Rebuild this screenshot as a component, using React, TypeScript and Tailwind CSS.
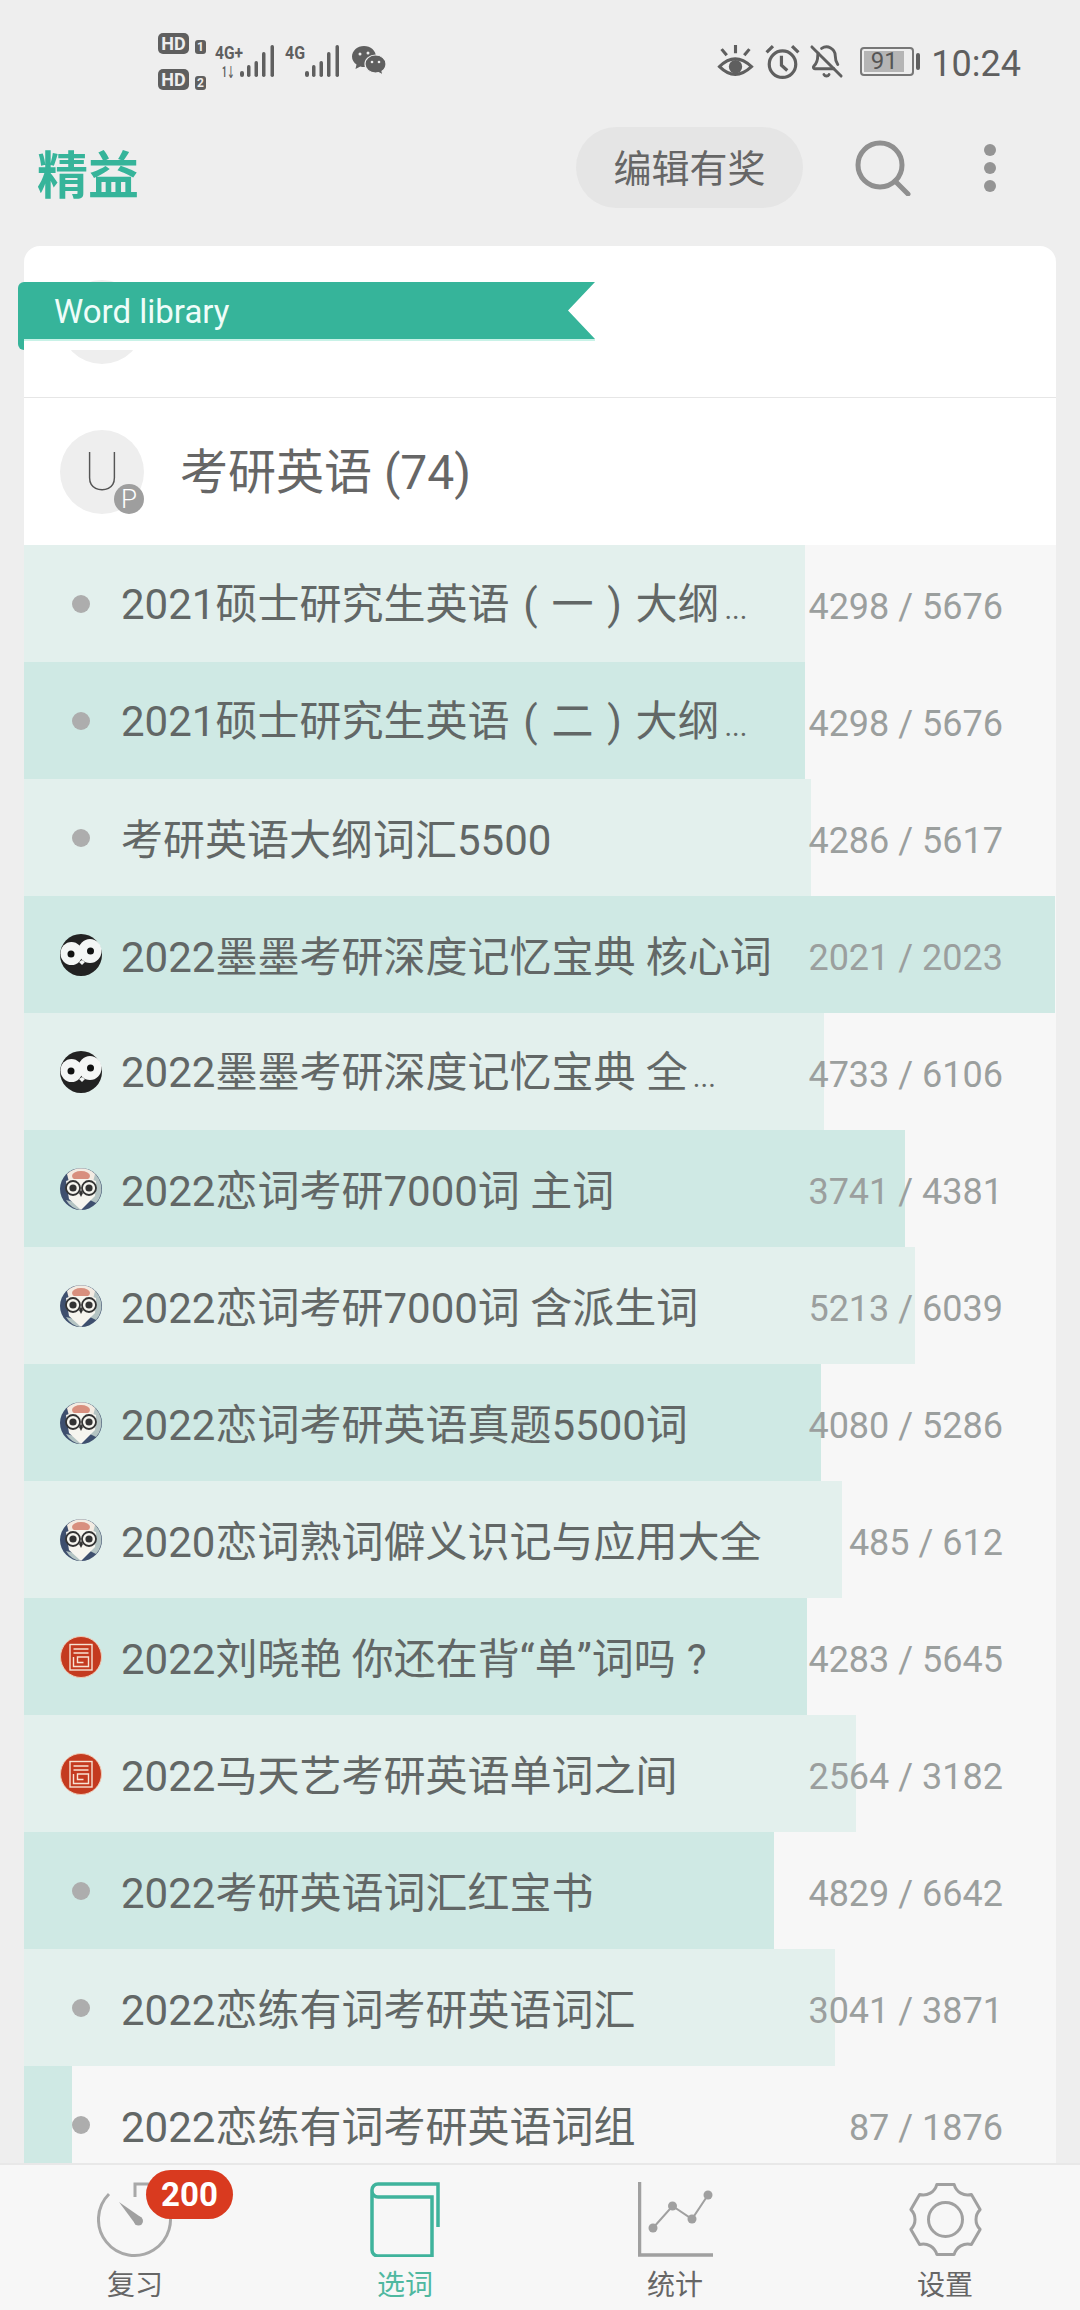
import type { ReactNode } from "react";
import { BellOff } from "lucide-react";

type Book = {
  title: ReactNode;
  learned: number;
  total: number;
  icon: "dot" | "momo" | "owl" | "seal";
};

// punctuation sits centred in a full-width cell in the reference
const Wide = ({ children }: { children: ReactNode }) => (
  <span className="inline-block w-[42px] text-center">{children}</span>
);
const Dots = () => <span className="ml-[5px] text-[29px]">...</span>;

const books: Book[] = [
  {
    title: (
      <>
        2021硕士研究生英语<Wide>(</Wide>一<Wide>)</Wide>大纲<Dots />
      </>
    ),
    learned: 4298,
    total: 5676,
    icon: "dot",
  },
  {
    title: (
      <>
        2021硕士研究生英语<Wide>(</Wide>二<Wide>)</Wide>大纲<Dots />
      </>
    ),
    learned: 4298,
    total: 5676,
    icon: "dot",
  },
  { title: "考研英语大纲词汇5500", learned: 4286, total: 5617, icon: "dot" },
  { title: "2022墨墨考研深度记忆宝典 核心词", learned: 2021, total: 2023, icon: "momo" },
  {
    title: (
      <>
        2022墨墨考研深度记忆宝典 全<Dots />
      </>
    ),
    learned: 4733,
    total: 6106,
    icon: "momo",
  },
  { title: "2022恋词考研7000词 主词", learned: 3741, total: 4381, icon: "owl" },
  { title: "2022恋词考研7000词 含派生词", learned: 5213, total: 6039, icon: "owl" },
  { title: "2022恋词考研英语真题5500词", learned: 4080, total: 5286, icon: "owl" },
  { title: "2020恋词熟词僻义识记与应用大全", learned: 485, total: 612, icon: "owl" },
  {
    title: (
      <>
        2022刘晓艳 你还在背“单”词吗<Wide>?</Wide>
      </>
    ),
    learned: 4283,
    total: 5645,
    icon: "seal",
  },
  { title: "2022马天艺考研英语单词之间", learned: 2564, total: 3182, icon: "seal" },
  { title: "2022考研英语词汇红宝书", learned: 4829, total: 6642, icon: "dot" },
  { title: "2022恋练有词考研英语词汇", learned: 3041, total: 3871, icon: "dot" },
  { title: "2022恋练有词考研英语词组", learned: 87, total: 1876, icon: "dot" },
];

// six tooth gear outline for the settings tab
function gearPath() {
  const cx = 36.5;
  const cy = 37.5;
  const outer = 36;
  const half = (14 * Math.PI) / 180;
  const pt = (a: number, r: number) =>
    `${(cx + r * Math.cos(a)).toFixed(2)} ${(cy + r * Math.sin(a)).toFixed(2)}`;
  let d = "";
  for (let i = 0; i < 6; i++) {
    const a = -Math.PI / 2 + (i * Math.PI) / 3;
    d += `${i === 0 ? "M" : "A14 14 0 0 0 "}${pt(a - half, outer)}L${pt(a + half, outer)}`;
  }
  return `${d}A14 14 0 0 0 ${pt(-Math.PI / 2 - half, outer)}Z`;
}

function MomoLogo() {
  return (
    <svg width="42" height="42" viewBox="0 0 42 42">
      <circle cx="21" cy="21" r="21" fill="#222" />
      <ellipse cx="11.5" cy="19.5" rx="11" ry="11.5" fill="#f4f6f5" />
      <ellipse cx="30" cy="17" rx="11.5" ry="12" fill="#f4f6f5" />
      <circle cx="11" cy="20" r="3.5" fill="#111" />
      <circle cx="30.5" cy="17" r="3.5" fill="#111" />
      <path d="M19 28l3 3 3-3-3-2z" fill="#f4f6f5" />
    </svg>
  );
}

function OwlLogo() {
  return (
    <svg width="42" height="42" viewBox="0 0 42 42">
      <circle cx="21" cy="21" r="21" fill="#3e4f6e" />
      <path d="M27 1a21 21 0 0 1 9 34l-8-4z" fill="#b4c4c3" />
      <path d="M7 6a20 20 0 0 1 28 0l-2 8H9z" fill="#f3ebe2" />
      <path d="M6 32a21 21 0 0 0 14 10l2-6z" fill="#b4c4c3" />
      <ellipse cx="21" cy="8" rx="9" ry="5" fill="#d88f7e" />
      <path d="M6 13l6-2h18l6 2-1 15-14 14-12-11z" fill="#f6f5ef" />
      <circle cx="13" cy="20" r="7" fill="#f6f5ef" stroke="#333" strokeWidth="1.8" />
      <circle cx="29" cy="20" r="7" fill="#f6f5ef" stroke="#333" strokeWidth="1.8" />
      <circle cx="13" cy="20" r="3.6" fill="#333" />
      <circle cx="29" cy="20" r="3.6" fill="#333" />
      <path d="M21 22l-2 3 2 4 2-4z" fill="#333" />
    </svg>
  );
}

function SealLogo() {
  return (
    <svg width="42" height="42" viewBox="0 0 42 42">
      <circle cx="21" cy="21" r="20.5" fill="#c43a1f" stroke="#f0c9b4" strokeWidth="1" />
      <g fill="none" stroke="#f7e2d2" strokeWidth="1.4">
        <rect x="10" y="8.5" width="22" height="25.5" />
        <path d="M13.5 13h15M13.5 17h15M13.5 21v9.5h15V21h-11v5.5h6" />
      </g>
    </svg>
  );
}

function BookIcon({ icon }: { icon: Book["icon"] }) {
  if (icon === "momo") return <MomoLogo />;
  if (icon === "owl") return <OwlLogo />;
  if (icon === "seal") return <SealLogo />;
  return <div className="h-[18px] w-[18px] rounded-full bg-[#adadad]" />;
}

function BookRow({ book, index }: { book: Book; index: number }) {
  return (
    <div className="relative flex h-[117px] shrink-0 items-center pl-[36px] pr-[53px]">
      <div
        className={`absolute inset-y-0 left-0 ${index % 2 ? "bg-[#cfe9e4]" : "bg-[#e3f0ed]"}`}
        style={{ width: `${(book.learned / book.total) * 100}%` }}
      />
      <div className="relative flex w-[42px] shrink-0 justify-center">
        <BookIcon icon={book.icon} />
      </div>
      <div className="relative ml-[19px] mt-[6px] whitespace-nowrap text-[42px] leading-[56px] text-[#626766]">
        {book.title}
      </div>
      <div className="relative ml-auto mt-[6px] whitespace-nowrap text-[36px] leading-[48px] text-[#9b9f9e]">
        {book.learned} / {book.total}
      </div>
    </div>
  );
}

function StatusBar() {
  return (
    <div className="flex h-[122px] shrink-0 items-center justify-between pl-[158px] pr-[59px] text-[#5f5f5f]">
      <div className="flex items-center">
        <div className="flex w-[48px] flex-col gap-[15px]">
          {["1", "2"].map((n) => (
            <div key={n} className="flex items-end justify-between">
              <span className="flex h-[21px] w-[31px] items-center justify-center rounded-[5px] bg-[#5f5f5f] text-[18px] font-bold leading-[21px] text-[#eee]">
                HD
              </span>
              <span className="flex h-[14px] w-[11px] items-center justify-center rounded-[3px] bg-[#5f5f5f] text-[12px] font-bold leading-[14px] text-[#eee]">
                {n}
              </span>
            </div>
          ))}
        </div>
        <svg className="ml-[9px]" width="125" height="34" viewBox="0 0 125 34" fill="#5f5f5f">
          <text x="0" y="15" fontSize="18" fontWeight="700" textLength="28" lengthAdjust="spacingAndGlyphs">
            4G+
          </text>
          <text x="7" y="33" fontSize="14" fontWeight="700" textLength="13" lengthAdjust="spacingAndGlyphs">
            1↓
          </text>
          <rect x="25" y="27" width="4" height="6" rx="2" />
          <rect x="32" y="21" width="3.5" height="12" rx="1.7" />
          <rect x="39.5" y="17" width="3.5" height="16" rx="1.7" />
          <rect x="47" y="8" width="3.5" height="25" rx="1.7" />
          <rect x="55.5" y="1" width="3.5" height="32" rx="1.7" />
          <text x="70" y="15" fontSize="18" fontWeight="700" textLength="20" lengthAdjust="spacingAndGlyphs">
            4G
          </text>
          <rect x="90" y="27" width="4" height="6" rx="2" />
          <rect x="97" y="21" width="3.5" height="12" rx="1.7" />
          <rect x="104.5" y="17" width="3.5" height="16" rx="1.7" />
          <rect x="112" y="8" width="3.5" height="25" rx="1.7" />
          <rect x="120.5" y="1" width="3.5" height="32" rx="1.7" />
        </svg>
        <svg className="ml-[12px]" width="34" height="30" viewBox="0 0 34 30">
          <path d="M12 0C5.4 0 0 4.7 0 10.500c0 3.300 1.800 6.200 4.500 8.100L3.500 23l4.800-2.600c1.200.4 2.400.6 3.700.6 6.600 0 12-4.700 12-10.500S18.600 0 12 0z" fill="#5f5f5f" />
          <path d="M23.500 9C17.700 9 13 13 13 18s4.700 9 10.500 9c1 0 2-.1 3-.4L31 29l-1-3.700c2.500-1.700 4-4.300 4-7.300 0-5-4.700-9-10.500-9z" fill="#5f5f5f" stroke="#eee" strokeWidth="1.2" />
          <circle cx="8" cy="8" r="1.500" fill="#eee" />
          <circle cx="16" cy="7" r="1.500" fill="#eee" />
          <circle cx="20" cy="16" r="1.300" fill="#eee" />
          <circle cx="27" cy="16" r="1.300" fill="#eee" />
        </svg>
      </div>
      <div className="flex items-center">
        <svg width="37" height="33" viewBox="0 0 35 32" fill="none" stroke="#5f5f5f" strokeWidth="3">
          <path d="M2 21Q17 6 33 21Q17 36 2 21z" />
          <circle cx="17.500" cy="21" r="6.500" fill="#5f5f5f" stroke="none" />
          <path d="M17.500 0v8M4 4l5 6M31 4l-5 6" />
        </svg>
        <svg className="ml-[11px]" width="35" height="35" viewBox="0 0 33 33" fill="none" stroke="#5f5f5f" strokeWidth="3">
          <circle cx="16.500" cy="19" r="12.500" />
          <path d="M15.500 11v9l5.500 5M1.500 8l6-6M31.500 8l-6-6" />
        </svg>
        <BellOff className="ml-[9px]" size={35} strokeWidth={2} color="#5f5f5f" />
        <div className="ml-[16px] flex items-center">
          <div className="flex h-[29px] w-[54px] items-center rounded-[4px] border-2 border-[#777] p-[2px]">
            <div className="flex h-full w-[40px] items-center justify-center bg-[#b5b5b5] text-[24px] leading-none text-[#555]">
              91
            </div>
          </div>
          <div className="ml-[2px] h-[17px] w-[4px] rounded-full bg-[#5f5f5f]" />
        </div>
        <div className="ml-[11px] mt-[6px] text-[36px] leading-none text-[#5f5f5f]">10:24</div>
      </div>
    </div>
  );
}

function Header() {
  return (
    <div className="flex shrink-0 items-center pb-[38px] pl-[37px] pr-[84px] pt-[5px]">
      <div className="mt-[17px] text-[51px] font-bold leading-[51px] text-[#36b49a]">精益</div>
      <div className="ml-auto flex h-[81px] w-[227px] items-center justify-center rounded-full bg-[#e5e5e5] pt-[3px] text-[38px] text-[#666]">
        编辑有奖
      </div>
      <svg className="ml-[52px]" width="56" height="56" viewBox="0 0 56 56" fill="none" stroke="#8f8f8f" strokeWidth="5" strokeLinecap="round">
        <circle cx="25" cy="25" r="22" />
        <path d="M40 41l13 13" />
      </svg>
      <div className="ml-[73px] flex flex-col gap-[6px]">
        <div className="h-[12px] w-[12px] rounded-full bg-[#949494]" />
        <div className="h-[12px] w-[12px] rounded-full bg-[#949494]" />
        <div className="h-[12px] w-[12px] rounded-full bg-[#949494]" />
      </div>
    </div>
  );
}

function TabBar() {
  const label = "mt-[13px] text-[28px] leading-[32px]";
  return (
    <div className="grid h-[147px] shrink-0 grid-cols-4 border-t-2 border-[#e8e8e8] bg-[#f7f7f7] pt-[17px]">
      <div className="flex flex-col items-center">
        <div className="relative h-[75px] w-[76px]">
          <svg width="76" height="76" viewBox="0 0 76 76" fill="none" stroke="#a8a8a8" strokeWidth="3">
            <path d="M12 12A36 36 0 1 0 70 22" />
            <path d="M38 15V2h14" />
            <path d="M22 20l23 16-6 7z" fill="#a0a0a0" stroke="none" />
            <circle cx="41.500" cy="39" r="4.500" fill="#a0a0a0" stroke="none" />
          </svg>
          <div className="absolute left-[49px] top-[-12px] flex h-[49px] w-[87px] items-center justify-center rounded-full bg-[#d93a1f] text-[33px] font-bold leading-none text-white">
            200
          </div>
        </div>
        <div className={`${label} text-[#666]`}>复习</div>
      </div>
      <div className="flex flex-col items-center">
        <svg width="70" height="75" viewBox="0 0 70 75" fill="none" stroke="#3fb39c" strokeWidth="3.500">
          <path d="M68 45V2H8a6 6 0 0 0-6 6v60a6 6 0 0 0 6 6h54V15H8a6 6 0 0 1-6-6" />
        </svg>
        <div className={`${label} text-[#4fb8a0]`}>选词</div>
      </div>
      <div className="flex flex-col items-center">
        <svg width="75" height="75" viewBox="0 0 75 75" fill="none" stroke="#a0a0a0">
          <path d="M1.500 0v73H75" strokeWidth="3.500" />
          <path d="M15 46L34.500 24 54 37 70 13" strokeWidth="2" />
          <g fill="#a0a0a0" stroke="none">
            <circle cx="15" cy="46" r="4.500" />
            <circle cx="34.500" cy="24" r="4.500" />
            <circle cx="54" cy="37" r="4.500" />
            <circle cx="70" cy="13" r="4.500" />
          </g>
        </svg>
        <div className={`${label} text-[#666]`}>统计</div>
      </div>
      <div className="flex flex-col items-center">
        <svg width="75" height="75" viewBox="0 0 73 75" fill="none" stroke="#a0a0a0" strokeWidth="3" strokeLinejoin="round">
          <path d={gearPath()} />
          <circle cx="36.500" cy="37.500" r="17" />
        </svg>
        <div className={`${label} text-[#666]`}>设置</div>
      </div>
    </div>
  );
}

export default function App() {
  return (
    <div className="relative flex h-[2310px] w-[1080px] flex-col overflow-hidden bg-[#eeeeee] font-['Roboto','Noto_Sans_CJK_SC',sans-serif]">
      <StatusBar />
      <Header />

      <div className="mx-[24px] flex min-h-0 flex-1 flex-col overflow-hidden rounded-t-[16px] bg-white">
        {/* row scrolled up behind the ribbon */}
        <div className="flex h-[152px] shrink-0 items-end border-b border-[#e6e6e6] pb-[33px] pl-[36px]">
          <div className="h-[84px] w-[84px] rounded-full bg-[#eeeeee]" />
        </div>
        <div className="flex h-[147px] shrink-0 items-center pl-[36px]">
          <div className="relative flex h-[84px] w-[84px] items-center justify-center rounded-full bg-[#eeeeee]">
            <span className="text-[54px] font-thin leading-none text-[#555]">U</span>
            <span className="absolute bottom-0 right-0 flex h-[30px] w-[30px] items-center justify-center rounded-full bg-[#9e9e9e] text-[26px] font-light leading-none text-white">
              P
            </span>
          </div>
          <div className="ml-[36px] mt-[2px] text-[48px] leading-[60px] text-[#666]">考研英语 (74)</div>
        </div>
        <div className="flex min-h-0 flex-1 flex-col overflow-hidden bg-[#f7f7f7]">
          {books.map((book, i) => (
            <BookRow key={i} book={book} index={i} />
          ))}
        </div>
      </div>

      <TabBar />

      {/* ribbon */}
      <div className="absolute left-[18px] top-[282px] w-[577px]">
        <div className="flex h-[57px] items-center rounded-tl-[6px] bg-[#36b49a] pl-[36px] pt-[2px] text-[33px] leading-none text-[#effdf9] [clip-path:polygon(0_0,100%_0,calc(100%-27px)_50%,100%_100%,0_100%)]">
          Word library
        </div>
        <div className="flex">
          <div className="h-[11px] w-[6px] rounded-bl-[6px] bg-[#36b49a]" />
          <div className="h-[11px] flex-1 border-t-2 border-[#c8f2e7] bg-white" />
        </div>
      </div>
    </div>
  );
}
